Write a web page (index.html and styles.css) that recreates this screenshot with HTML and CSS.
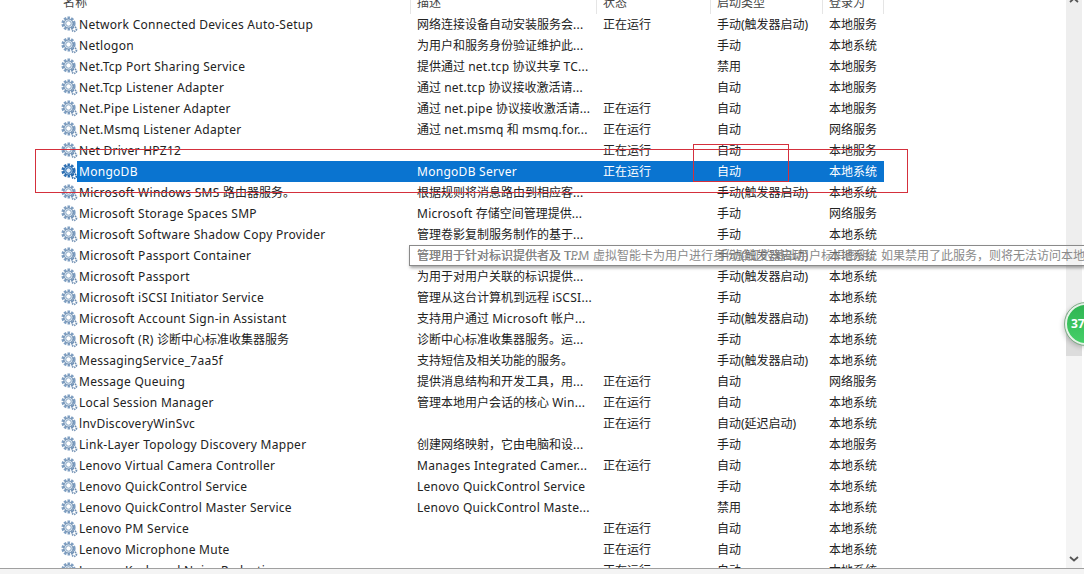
FILE: index.html
```html
<!DOCTYPE html>
<html lang="zh-CN">
<head>
  <meta charset="UTF-8">
  <title>服务</title>
  <link rel="stylesheet" href="styles.css">
</head>
<body>
  <svg class="defs" width="0" height="0">
    <symbol id="gear" viewBox="0 0 17 17">
      <circle cx="7.5" cy="7.5" r="5.7" fill="none" stroke="#7f9fc2" stroke-width="2.8" stroke-dasharray="2.4 1.2"/>
      <circle cx="7.5" cy="7.5" r="4.6" fill="#d5e2ef" stroke="#6788ab" stroke-width="1"/>
      <circle cx="7.5" cy="7.5" r="2.7" fill="#fff" stroke="#8eaac6" stroke-width="1"/>
      <circle cx="13.2" cy="13.2" r="2.2" fill="none" stroke="#6f8fb2" stroke-width="1.8" stroke-dasharray="1.2 .8"/>
      <circle cx="13.2" cy="13.2" r=".9" fill="#fff"/>
    </symbol>
    <symbol id="gear-on" viewBox="0 0 17 17">
      <circle cx="7.5" cy="7.5" r="5.7" fill="none" stroke="#2f70b3" stroke-width="2.8" stroke-dasharray="2.4 1.2"/>
      <circle cx="7.5" cy="7.5" r="4.6" fill="#8fb8e0" stroke="#1a5ea3" stroke-width="1"/>
      <circle cx="7.5" cy="7.5" r="2.7" fill="#e6f0fa" stroke="#2f70b3" stroke-width="1"/>
      <circle cx="13.2" cy="13.2" r="2.2" fill="none" stroke="#1f64a8" stroke-width="1.8" stroke-dasharray="1.2 .8"/>
    </symbol>
  </svg>

  <div class="window">
    <div class="list">
      <div class="head">
        <span class="name">名称</span>
        <span class="desc">描述</span>
        <span class="state">状态</span>
        <span class="start">启动类型</span>
        <span class="logon">登录为</span>
      </div>

      <div class="row"><svg class="ico"><use href="#gear"/></svg><span class="name">Network Connected Devices Auto-Setup</span><span class="desc">网络连接设备自动安装服务会<i class="en">...</i></span><span class="state">正在运行</span><span class="start">手动(触发器启动)</span><span class="logon">本地服务</span></div>
      <div class="row"><svg class="ico"><use href="#gear"/></svg><span class="name">Netlogon</span><span class="desc">为用户和服务身份验证维护此<i class="en">...</i></span><span class="state"></span><span class="start">手动</span><span class="logon">本地系统</span></div>
      <div class="row"><svg class="ico"><use href="#gear"/></svg><span class="name">Net.Tcp Port Sharing Service</span><span class="desc">提供通过 <i class="en">net.tcp</i> 协议共享 <i class="en">TC...</i></span><span class="state"></span><span class="start">禁用</span><span class="logon">本地服务</span></div>
      <div class="row"><svg class="ico"><use href="#gear"/></svg><span class="name">Net.Tcp Listener Adapter</span><span class="desc">通过 <i class="en">net.tcp</i> 协议接收激活请<i class="en">...</i></span><span class="state"></span><span class="start">自动</span><span class="logon">本地服务</span></div>
      <div class="row"><svg class="ico"><use href="#gear"/></svg><span class="name">Net.Pipe Listener Adapter</span><span class="desc">通过 <i class="en">net.pipe</i> 协议接收激活请<i class="en">...</i></span><span class="state">正在运行</span><span class="start">自动</span><span class="logon">本地服务</span></div>
      <div class="row"><svg class="ico"><use href="#gear"/></svg><span class="name">Net.Msmq Listener Adapter</span><span class="desc">通过 <i class="en">net.msmq</i> 和 <i class="en">msmq.for...</i></span><span class="state">正在运行</span><span class="start">自动</span><span class="logon">网络服务</span></div>
      <div class="row"><svg class="ico"><use href="#gear"/></svg><span class="name">Net Driver HPZ12</span><span class="desc"></span><span class="state">正在运行</span><span class="start">自动</span><span class="logon">本地服务</span></div>
      <div class="row selected"><svg class="ico"><use href="#gear-on"/></svg><span class="name">MongoDB</span><span class="desc"><i class="en">MongoDB Server</i></span><span class="state">正在运行</span><span class="start">自动</span><span class="logon">本地系统</span></div>
      <div class="row"><svg class="ico"><use href="#gear"/></svg><span class="name">Microsoft Windows SMS <i class="zh">路由器服务。</i></span><span class="desc">根据规则将消息路由到相应客<i class="en">...</i></span><span class="state"></span><span class="start">手动(触发器启动)</span><span class="logon">本地系统</span></div>
      <div class="row"><svg class="ico"><use href="#gear"/></svg><span class="name">Microsoft Storage Spaces SMP</span><span class="desc"><i class="en">Microsoft</i> 存储空间管理提供<i class="en">...</i></span><span class="state"></span><span class="start">手动</span><span class="logon">网络服务</span></div>
      <div class="row"><svg class="ico"><use href="#gear"/></svg><span class="name">Microsoft Software Shadow Copy Provider</span><span class="desc">管理卷影复制服务制作的基于<i class="en">...</i></span><span class="state"></span><span class="start">手动</span><span class="logon">本地系统</span></div>
      <div class="row"><svg class="ico"><use href="#gear"/></svg><span class="name">Microsoft Passport Container</span><span class="desc">管理用于针对标识提供者及 <i class="en">T...</i></span><span class="state"></span><span class="start">手动(触发器启动)</span><span class="logon">本地系统</span></div>
      <div class="row"><svg class="ico"><use href="#gear"/></svg><span class="name">Microsoft Passport</span><span class="desc">为用于对用户关联的标识提供<i class="en">...</i></span><span class="state"></span><span class="start">手动(触发器启动)</span><span class="logon">本地系统</span></div>
      <div class="row"><svg class="ico"><use href="#gear"/></svg><span class="name">Microsoft iSCSI Initiator Service</span><span class="desc">管理从这台计算机到远程 <i class="en">iSCSI...</i></span><span class="state"></span><span class="start">手动</span><span class="logon">本地系统</span></div>
      <div class="row"><svg class="ico"><use href="#gear"/></svg><span class="name">Microsoft Account Sign-in Assistant</span><span class="desc">支持用户通过 <i class="en">Microsoft</i> 帐户<i class="en">...</i></span><span class="state"></span><span class="start">手动(触发器启动)</span><span class="logon">本地系统</span></div>
      <div class="row"><svg class="ico"><use href="#gear"/></svg><span class="name">Microsoft (R) <i class="zh">诊断中心标准收集器服务</i></span><span class="desc">诊断中心标准收集器服务。运<i class="en">...</i></span><span class="state"></span><span class="start">手动</span><span class="logon">本地系统</span></div>
      <div class="row"><svg class="ico"><use href="#gear"/></svg><span class="name">MessagingService_7aa5f</span><span class="desc">支持短信及相关功能的服务。</span><span class="state"></span><span class="start">手动(触发器启动)</span><span class="logon">本地系统</span></div>
      <div class="row"><svg class="ico"><use href="#gear"/></svg><span class="name">Message Queuing</span><span class="desc">提供消息结构和开发工具，用<i class="en">...</i></span><span class="state">正在运行</span><span class="start">自动</span><span class="logon">网络服务</span></div>
      <div class="row"><svg class="ico"><use href="#gear"/></svg><span class="name">Local Session Manager</span><span class="desc">管理本地用户会话的核心 <i class="en">Win...</i></span><span class="state">正在运行</span><span class="start">自动</span><span class="logon">本地系统</span></div>
      <div class="row"><svg class="ico"><use href="#gear"/></svg><span class="name">lnvDiscoveryWinSvc</span><span class="desc"></span><span class="state">正在运行</span><span class="start">自动(延迟启动)</span><span class="logon">本地系统</span></div>
      <div class="row"><svg class="ico"><use href="#gear"/></svg><span class="name">Link-Layer Topology Discovery Mapper</span><span class="desc">创建网络映射，它由电脑和设<i class="en">...</i></span><span class="state"></span><span class="start">手动</span><span class="logon">本地服务</span></div>
      <div class="row"><svg class="ico"><use href="#gear"/></svg><span class="name">Lenovo Virtual Camera Controller</span><span class="desc"><i class="en">Manages Integrated Camer...</i></span><span class="state">正在运行</span><span class="start">自动</span><span class="logon">本地系统</span></div>
      <div class="row"><svg class="ico"><use href="#gear"/></svg><span class="name">Lenovo QuickControl Service</span><span class="desc"><i class="en">Lenovo QuickControl Service</i></span><span class="state"></span><span class="start">手动</span><span class="logon">本地系统</span></div>
      <div class="row"><svg class="ico"><use href="#gear"/></svg><span class="name">Lenovo QuickControl Master Service</span><span class="desc"><i class="en">Lenovo QuickControl Maste...</i></span><span class="state"></span><span class="start">禁用</span><span class="logon">本地系统</span></div>
      <div class="row"><svg class="ico"><use href="#gear"/></svg><span class="name">Lenovo PM Service</span><span class="desc"></span><span class="state">正在运行</span><span class="start">自动</span><span class="logon">本地系统</span></div>
      <div class="row"><svg class="ico"><use href="#gear"/></svg><span class="name">Lenovo Microphone Mute</span><span class="desc"></span><span class="state">正在运行</span><span class="start">自动</span><span class="logon">本地系统</span></div>
      <div class="row"><svg class="ico"><use href="#gear"/></svg><span class="name">Lenovo Keyboard Noise Reduction</span><span class="desc"></span><span class="state">正在运行</span><span class="start">自动</span><span class="logon">本地系统</span></div>
    </div>
    <div class="scrollbar">
      <svg class="chevron chevron-up" viewBox="0 0 10 6"><path d="M1 5 5 1.5 9 5" fill="none" stroke="#555" stroke-width="1.8"/></svg>
      <div class="thumb"></div>
      <svg class="chevron" viewBox="0 0 10 6"><path d="M1 1 5 4.5 9 1" fill="none" stroke="#555" stroke-width="1.8"/></svg>
    </div>
  </div>
  <div class="statusbar"></div>

  <div class="tooltip">管理用于针对标识提供者及 <i class="en">TPM</i> 虚拟智能卡为用户进行身份验证的基础用户标识密钥。如果禁用了此服务，则将无法访问本地用户标识密钥</div>
  <div class="badge">37</div>
  <div class="mark mark-wide"></div>
  <div class="mark mark-small"></div>
</body>
</html>
```

FILE: styles.css
```css
html, body {
  margin: 0;
  height: 100%;
  overflow: hidden;
}

body {
  background: white;
  color: #222;
  font-family: 'Noto Sans', 'Noto Sans CJK SC', sans-serif;
  font-size: 12px;
  position: relative;
}

i {
  font-style: normal;
}

.en {
  letter-spacing: .28px;
}

.zh {
  letter-spacing: 0;
}

.defs {
  position: absolute;
}

.window {
  display: flex;
  height: 568px;
  overflow: hidden;
}

.list {
  flex: 1;
  overflow: hidden;
}

.head {
  display: flex;
  height: 14px;
  padding-left: 61px;
  overflow: hidden;
  color: #444;
}

.head span {
  height: 14px;
  line-height: 5px;
  overflow: visible;
  border-right: 1px solid #e5e5e5;
}

.row {
  display: flex;
  align-items: center;
  height: 21px;
  line-height: 21px;
  padding-left: 61px;
  white-space: nowrap;
}

.ico {
  width: 17px;
  height: 17px;
  margin-right: -1px;
  flex: none;
}

.name, .desc, .state, .start, .logon {
  display: block;
  flex: none;
  box-sizing: border-box;
  padding-left: 6px;
  overflow: hidden;
}

.name {
  letter-spacing: .28px;
}

.row .name {
  width: 334px;
  padding-left: 2px;
}
.head .name {
  width: 350px;
  padding-left: 2px;
}
.desc { width: 186px; }
.state { width: 114px; }
.start { width: 112px; }
.logon { width: 61px; }

.selected .name, .selected .desc, .selected .state, .selected .start, .selected .logon {
  background: #0a74d0;
  color: white;
}

.scrollbar {
  width: 16px;
  margin-right: 2px;
  flex: none;
  display: flex;
  flex-direction: column;
  align-items: center;
  background: #f4f4f4;
}

.thumb {
  align-self: stretch;
  height: 359px;
  margin-top: -6px;
  margin-bottom: auto;
  background: linear-gradient(#eeeeee 88%, #dcdcdc 88%);
}

.chevron {
  width: 10px;
  height: 6px;
  flex: none;
  margin-bottom: 6px;
}

.chevron-up {
  margin-top: -3px;
  margin-bottom: 0;
  position: relative;
  z-index: 1;
}

.statusbar {
  height: 6px;
  box-sizing: border-box;
  background: #f4f4f4;
  border-top: 1px solid #a0a0a0;
}

.tooltip {
  position: absolute;
  left: 409px;
  top: 245px;
  width: 700px;
  height: 21px;
  line-height: 20px;
  padding-left: 7px;
  box-sizing: border-box;
  background: rgba(255, 255, 255, 0.3);
  border: 1px solid #8a8a8a;
  box-shadow: 1px 2px 3px rgba(0, 0, 0, 0.35);
  white-space: nowrap;
  overflow: hidden;
  color: #8a8a8a;
}

.badge {
  position: absolute;
  left: 1065px;
  top: 303px;
  width: 42px;
  height: 42px;
  box-sizing: border-box;
  border-radius: 50%;
  border: 2px solid #e6f3e8;
  outline: 1px solid #7fae88;
  box-shadow: -2px 2px 5px rgba(0, 0, 0, 0.2);
  background: linear-gradient(#2fb552, #45cf68);
  color: white;
  font-weight: bold;
  font-size: 12px;
  line-height: 38px;
  padding-left: 4px;
}

.mark {
  position: absolute;
  box-sizing: border-box;
  border: 1px solid #d4303c;
}

.mark-wide {
  left: 35px;
  top: 149px;
  width: 873px;
  height: 44px;
}

.mark-small {
  left: 693px;
  top: 144px;
  width: 96px;
  height: 38px;
}
```
